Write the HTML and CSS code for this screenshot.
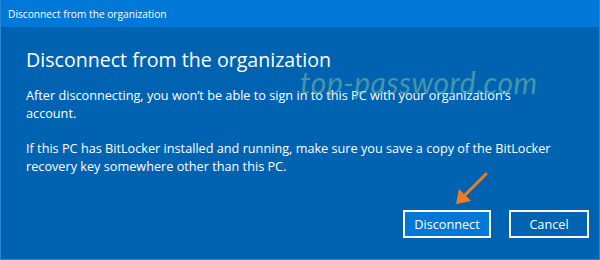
FILE: index.html
```html
<!DOCTYPE html>
<html lang="en">

<head>
    <meta charset="UTF-8" />
    <title>Disconnect from the organization</title>
    <link rel="stylesheet" href="styles.css">
</head>

<body>
    <div class="window">
        <div class="title-bar">Disconnect from the organization</div>

        <div class="dialog">
            <h1 class="dialog-title">Disconnect from the organization</h1>
            <p class="dialog-text">After disconnecting, you won’t be able to sign in to this PC with your organization’s account.</p>
            <p class="dialog-text">If this PC has BitLocker installed and running, make sure you save a copy of the BitLocker recovery key somewhere other than this PC.</p>

            <div class="button-row">
                <button class="btn btn-primary">Disconnect</button>
                <button class="btn">Cancel</button>
            </div>
        </div>

        <div class="watermark">top-password.com</div>

        <!-- orange arrow pointing at the button -->
        <svg class="arrow" width="40" height="40" viewBox="0 0 40 40">
            <line x1="34" y1="3" x2="10" y2="27" stroke="#f47a20" stroke-width="3" stroke-linecap="round" />
            <polygon points="4,33 7,18 19,30" fill="#f47a20" />
        </svg>
    </div>
</body>

</html>
```

FILE: styles.css
```css
body {
    margin: 0;
    font-family: 'Open Sans', 'Noto Sans', sans-serif;
    background: #0063b1;
}

.window {
    position: relative;
    width: 600px;
    height: 260px;
    box-sizing: border-box;
    border: 1px solid #2a86d6;
    border-top: none;
    background: #0063b1;
    display: flex;
    flex-direction: column;
    overflow: hidden;
}

.title-bar {
    height: 27px;
    background: #0078d7;
    color: #ffffff;
    font-size: 10.2px;
    line-height: 28px;
    padding-left: 7px;
    flex-shrink: 0;
}

.dialog {
    flex: 1;
    display: flex;
    flex-direction: column;
    padding: 19px 10px 0 25px;
    color: #ffffff;
}

.dialog-title {
    margin: 0 0 12px;
    font-size: 19.6px;
    font-weight: 400;
    line-height: 28px;
}

.dialog-text {
    margin: 0 0 17px;
    width: 528px;
    font-size: 12.7px;
    line-height: 18px;
}

.button-row {
    display: flex;
    justify-content: flex-end;
    gap: 18px;
    margin-top: auto;
    margin-bottom: 21px;
}

.btn {
    width: 80px;
    height: 28px;
    box-sizing: border-box;
    border: 2px solid #ffffff;
    background: transparent;
    color: #ffffff;
    font-family: inherit;
    font-size: 12.7px;
    padding: 0;
}

.btn-primary {
    width: 88px;
    background: #0078d7;
}

.watermark {
    position: absolute;
    left: 299px;
    top: 64px;
    font-family: 'Lato', sans-serif;
    font-style: italic;
    font-size: 30px;
    color: rgba(140, 200, 160, 0.5);
    letter-spacing: 0.5px;
    pointer-events: none;
}

.arrow {
    position: absolute;
    left: 451px;
    top: 171px;
}
```
